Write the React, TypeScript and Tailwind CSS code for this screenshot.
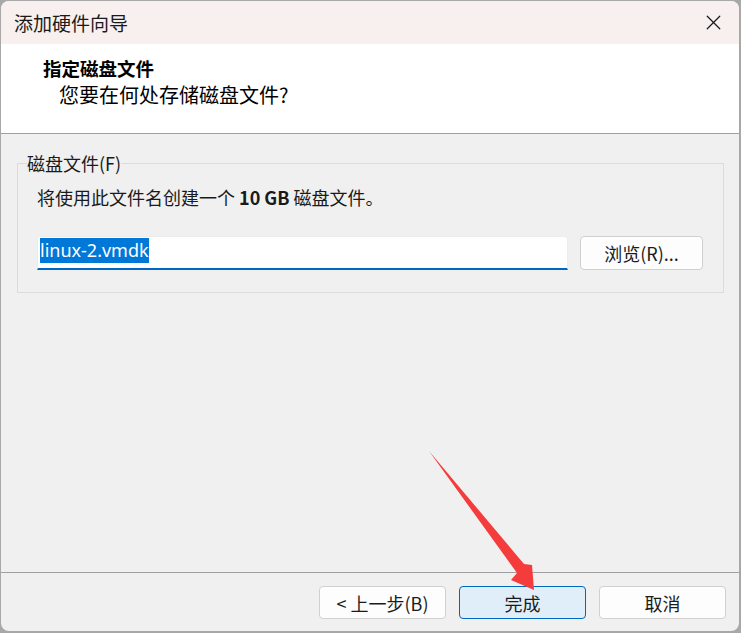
import { X } from "lucide-react"

const cjk = "font-['Noto_Sans_CJK_SC','Noto_Sans',sans-serif]"

function DialogButton({ label, primary }: { label: string; primary?: boolean }) {
  return (
    <button
      className={`h-[33px] w-[127px] rounded-[4px] border text-[18px] leading-none text-[#1b1b1b] ${
        primary ? "border-[#0067c0] bg-[#e0eef9]" : "border-[#d0d0d0] bg-[#fdfdfd]"
      }`}
    >
      {label}
    </button>
  )
}

export default function App() {
  return (
    <div className={`relative h-[633px] w-[741px] bg-[#a8a8a8] pt-[1px] pr-[2px] pb-[2px] pl-[1px] ${cjk}`}>
      <div className="flex h-full flex-col overflow-hidden rounded-[8px] bg-[#f0f0f0]">
        {/* title bar */}
        <div className="flex h-[43px] shrink-0 items-center justify-between bg-[#f7f0ee] pl-[13px] pr-[13px]">
          <span className="text-[19px] leading-none text-[#1a1a1a]">添加硬件向导</span>
          <X className="h-[25px] w-[25px] text-[#1a1a1a]" strokeWidth={1.2} />
        </div>

        {/* page header */}
        <div className="h-[90px] shrink-0 border-b border-[#a0a0a0] bg-white pl-[42px] pt-[12px]">
          <div className="text-[18.5px] font-bold leading-[24px] text-black">指定磁盘文件</div>
          <div className="mt-[3px] pl-[16px] text-[20px] leading-[24px] text-black">您要在何处存储磁盘文件?</div>
        </div>

        {/* body */}
        <div className="flex-1 px-[16px] pt-[17px]">
          <fieldset className="w-[707px] border border-[#dcdcdc] pl-[9px] pr-[20px] pb-[22px]">
            <legend className="px-0 text-[18px] leading-[24px] text-[#1a1a1a]">磁盘文件(F)</legend>
            <div className="ml-[10px]">
              <div className="mt-[10px] text-[18px] leading-[24px] text-[#1a1a1a]">
                将使用此文件名创建一个 <span className="font-semibold">10 GB</span> 磁盘文件。
              </div>
              <div className="mt-[27px] flex items-center gap-[12px]">
                <div className="flex h-[34px] w-[531px] items-start rounded-t-[3px] border border-b-2 border-[#ececec] border-b-[#0067c0] bg-white pl-[2px] pt-[1px]">
                  <span className="bg-[#0078d7] font-['Noto_Sans',sans-serif] text-[18px] leading-[25px] text-white">
                    linux-2.vmdk
                  </span>
                </div>
                <button className="h-[34px] w-[123px] rounded-[4px] border border-[#d0d0d0] bg-[#fdfdfd] text-[18px] leading-none text-[#1b1b1b]">
                  浏览(R)...
                </button>
              </div>
            </div>
          </fieldset>
        </div>

        {/* footer buttons */}
        <div className="flex h-[59px] shrink-0 items-start justify-end gap-[13px] border-t border-[#a0a0a0] pr-[13px] pt-[13px]">
          <DialogButton label="< 上一步(B)" />
          <DialogButton label="完成" primary />
          <DialogButton label="取消" />
        </div>
      </div>

      {/* red annotation arrow */}
      <svg className="pointer-events-none absolute left-0 top-0" width="741" height="633" viewBox="0 0 741 633">
        <polygon points="429,451 524,564 532,565 534,590 511,580 517,573" fill="#f43c3c" />
      </svg>
    </div>
  )
}
